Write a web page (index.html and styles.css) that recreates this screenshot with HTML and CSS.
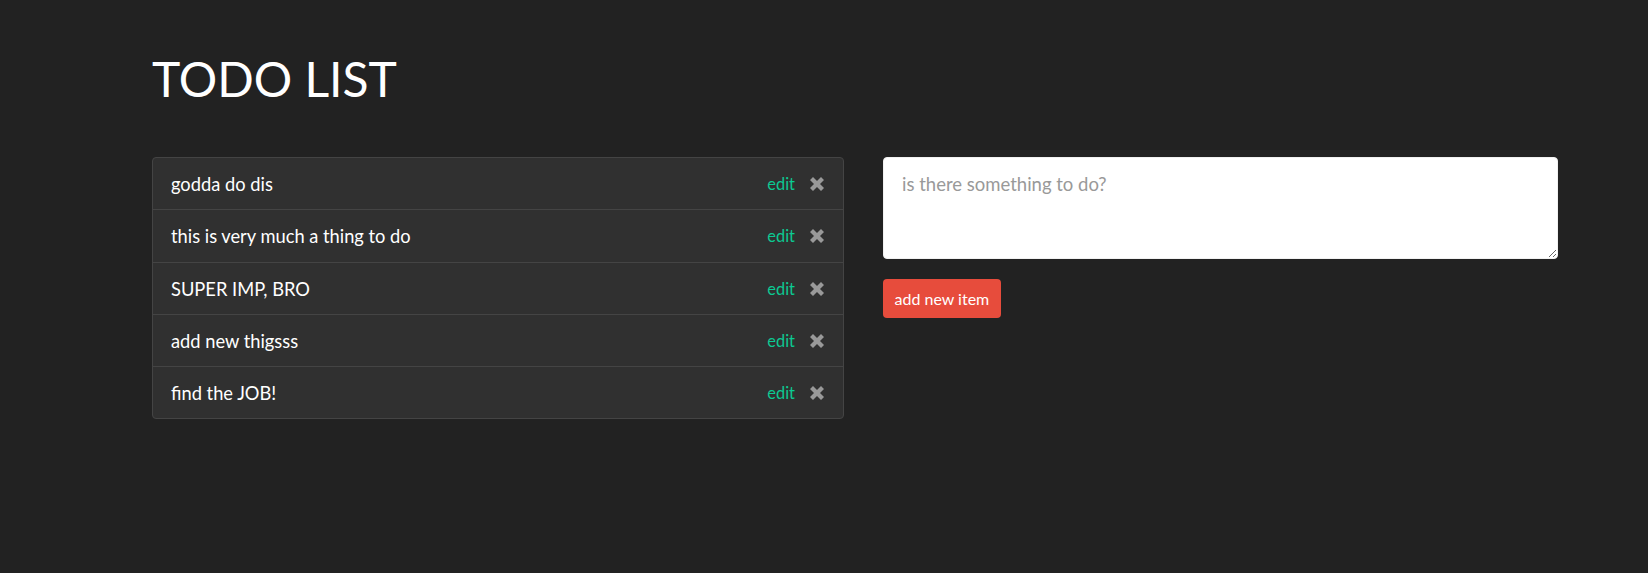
FILE: index.html
```html
<!DOCTYPE html>
<html>
<head>
<meta charset="utf-8">
<title>Todo List</title>
<link rel="stylesheet" href="styles.css">
</head>
<body>
<div class="page">
  <h1 class="title">TODO LIST</h1>
  <div class="layout">
    <ul class="todo-list">
      <li class="todo-item"><span class="todo-text">godda do dis</span><span class="actions"><a class="edit" href="#">edit</a><svg class="remove" viewBox="0 0 14 14" width="14" height="14"><polygon points="0,3 3,0 7,4 11,0 14,3 10,7 14,11 11,14 7,10 3,14 0,11 4,7"/></svg></span></li>
      <li class="todo-item"><span class="todo-text">this is very much a thing to do</span><span class="actions"><a class="edit" href="#">edit</a><svg class="remove" viewBox="0 0 14 14" width="14" height="14"><polygon points="0,3 3,0 7,4 11,0 14,3 10,7 14,11 11,14 7,10 3,14 0,11 4,7"/></svg></span></li>
      <li class="todo-item"><span class="todo-text">SUPER IMP, BRO</span><span class="actions"><a class="edit" href="#">edit</a><svg class="remove" viewBox="0 0 14 14" width="14" height="14"><polygon points="0,3 3,0 7,4 11,0 14,3 10,7 14,11 11,14 7,10 3,14 0,11 4,7"/></svg></span></li>
      <li class="todo-item"><span class="todo-text">add new thigsss</span><span class="actions"><a class="edit" href="#">edit</a><svg class="remove" viewBox="0 0 14 14" width="14" height="14"><polygon points="0,3 3,0 7,4 11,0 14,3 10,7 14,11 11,14 7,10 3,14 0,11 4,7"/></svg></span></li>
      <li class="todo-item"><span class="todo-text">find the JOB!</span><span class="actions"><a class="edit" href="#">edit</a><svg class="remove" viewBox="0 0 14 14" width="14" height="14"><polygon points="0,3 3,0 7,4 11,0 14,3 10,7 14,11 11,14 7,10 3,14 0,11 4,7"/></svg></span></li>
    </ul>
    <form class="new-item">
      <textarea class="new-text" placeholder="is there something to do?"></textarea>
      <button type="button" class="add-btn">add new item</button>
    </form>
  </div>
</div>
</body>
</html>
```
FILE: styles.css
```css
html, body {
  margin: 0;
  padding: 0;
  background: #222222;
  font-family: Lato, "Open Sans", sans-serif;
  color: #ffffff;
}
.page {
  padding: 52px 0 0 152px;
  width: 1406px;
}
.title {
  margin: 0 0 52px 0;
  font-size: 48px;
  line-height: 53px;
  font-weight: 400;
  color: #ffffff;
}
.layout {
  display: grid;
  grid-template-columns: 692px 675px;
  column-gap: 39px;
  align-items: start;
}
.todo-list {
  list-style: none;
  margin: 0;
  padding: 0;
  background: #303030;
  border: 1px solid #444444;
  border-radius: 4px;
}
.todo-item {
  display: flex;
  align-items: center;
  justify-content: space-between;
  padding: 13px 19px 12.3px 18px;
  height: 26px;
  border-top: 1px solid #444444;
  font-size: 18.3px;
  line-height: 26px;
}
.todo-item:first-child {
  border-top: 0;
}
.actions {
  display: flex;
  align-items: center;
  gap: 15px;
}
.edit {
  color: #0cc992;
  font-size: 16.4px;
  text-decoration: none;
}
.remove {
  fill: #999999;
  display: block;
}
.new-item {
  display: flex;
  flex-direction: column;
  align-items: flex-start;
  gap: 20px;
}
.new-text {
  box-sizing: border-box;
  width: 675px;
  height: 102px;
  margin: 0;
  padding: 12.5px 18px 11px 18px;
  border: 1px solid #f1f1f1;
  border-radius: 4px;
  background: #ffffff;
  font-family: Lato, "Open Sans", sans-serif;
  font-size: 18.5px;
  line-height: 26px;
  color: #333;
  outline: none;
}
.new-text::placeholder {
  color: #999999;
}
.add-btn {
  height: 39px;
  padding: 0 11.5px;
  border: 0;
  border-radius: 4px;
  background: #e74c3c;
  color: #ffffff;
  font-family: Lato, "Open Sans", sans-serif;
  font-size: 16px;
}
```
